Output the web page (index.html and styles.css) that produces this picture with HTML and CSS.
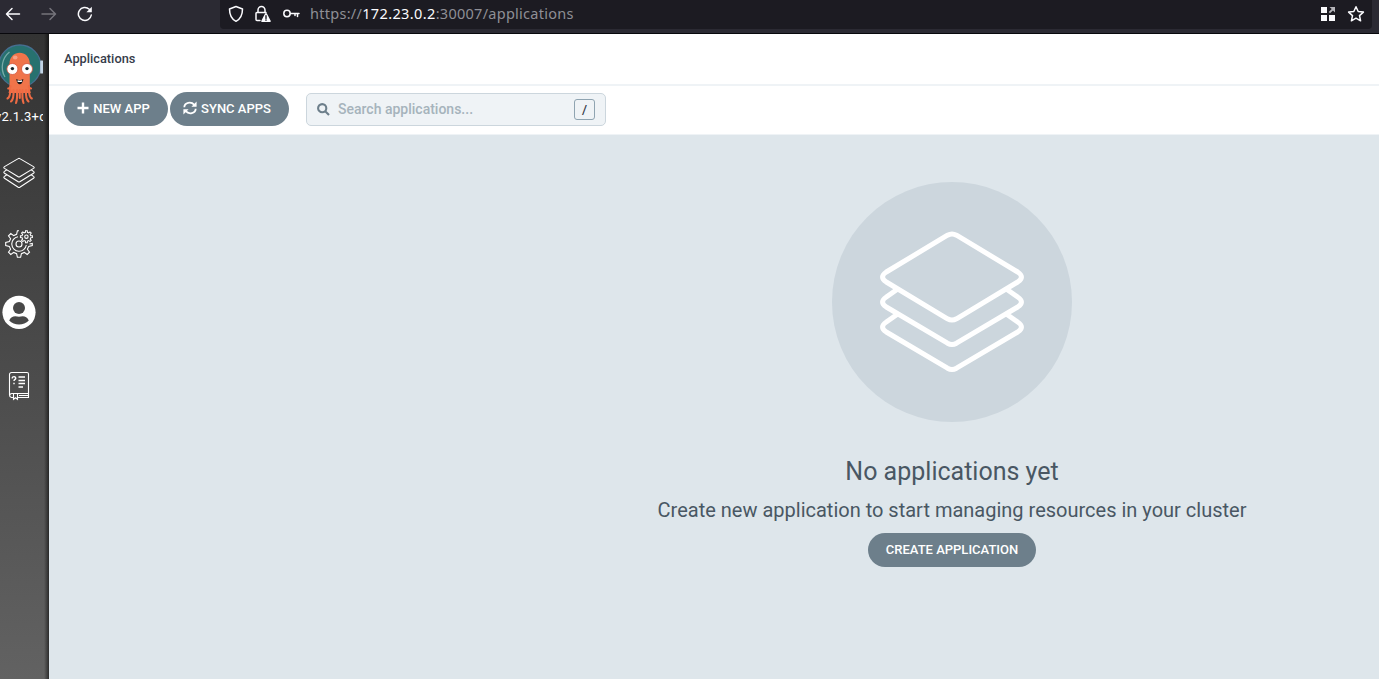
FILE: index.html
```html
<!DOCTYPE html>
<html lang="en">
<head>
<meta charset="utf-8">
<title>Applications</title>
<link rel="stylesheet" href="styles.css">
</head>
<body>
<header class="browser">
  <div class="nav">
    <svg class="back" width="16" height="16" viewBox="0 0 16 16"><path d="M14.500 8H2M7 2.500 1.500 8 7 13.500"/></svg>
    <svg class="forward" width="16" height="16" viewBox="0 0 16 16"><path d="M1 8h13M9 2.500 14.500 8 9 13.500"/></svg>
    <svg class="reload" width="16" height="16" viewBox="0 0 16 16"><path d="M14.300 9A6.500 6.500 0 1 1 12.300 3.200"/><path d="M14.800.8v5.400H9.400z" class="solid"/></svg>
  </div>
  <div class="address">
    <svg width="16" height="18" viewBox="0 0 16 18"><path d="M8 1.500 14.500 4C14.500 10 12 14.300 8 16.300 4 14.300 1.500 10 1.500 4z"/></svg>
    <svg class="lock" width="18" height="18" viewBox="0 0 18 18"><path d="M4 7.500V5a3.500 3.500 0 0 1 7 0v2.500M6 15.500H3a1 1 0 0 1-1-1v-6a1 1 0 0 1 1-1h9"/><path class="solid" d="M12 8q.6 0 .9.600L16.800 16q.2 1-.8 1H8q-1 0-.8-1L11.100 8.600Q11.400 8 12 8z"/><path class="mark" d="M12 10.800v2.700M12 15v.3"/></svg>
    <svg class="key" width="18" height="10" viewBox="0 0 18 10"><circle cx="4" cy="4.500" r="3.200"/><path d="M7.500 4.500h8.500M14.500 4.500v3M12 4.500v2"/></svg>
    <div class="url">https://<span>172.23.0.2</span>:30007/applications</div>
    <svg class="grid" width="16" height="16" viewBox="0 0 16 16"><path class="solid" d="M1 1h6v6H1zM1 9h6v6H1zM9 9h6v6H9z"/><path class="arrow" d="M9.500 1H15v5.500l-2-2L10 7.300 8.700 6l3-3z"/></svg>
    <svg class="star" width="18" height="18" viewBox="0 0 18 18"><path d="m9 1.700 2.200 4.800 5.200.6-3.900 3.500 1.100 5.200L9 13.200l-4.600 2.600 1.100-5.200-3.900-3.500 5.200-.6z"/></svg>
  </div>
</header>
<div class="app">
  <nav class="sidebar">
    <svg class="argo" width="43" height="64" viewBox="0 0 43 64">
      <circle cx="19.800" cy="22" r="21" fill="#27716f" stroke="#466f91" stroke-width="1.300"/>
      <rect x="40.200" y="16.500" width="2.800" height="13" rx=".5" fill="#c3d5e5"/>
      <path d="M5 33C0 25 2 14 9.500 8" fill="none" stroke="#78aaa7" stroke-width="1.300"/>
      <path d="M9.500 20C9.500 5 29.800 5 29.800 20v25l1 4H8.500l1-4z" fill="#f0744a"/>
      <g fill="none" stroke="#ee6b44" stroke-width="2.100" stroke-linecap="round"><path d="M10.500 42q0 2.500-2.300 2.500M28.800 42q0 2.500 2.300 2.500M10.300 46q0 7-2.800 8.500M13.500 46q.5 9-2.500 11.500M17 46q.5 9-1 13M22.500 46q-.5 9 1 13M26 46q-.5 9 2.500 11.500M29 46q0 7 2.800 8.500M19.800 46v8"/></g>
      <ellipse cx="15.200" cy="13.500" rx="2.300" ry="2" fill="#f7a186"/>
      <circle cx="12.400" cy="25" r="5.500" fill="#fff" stroke="#d5533b" stroke-width=".8"/>
      <circle cx="27" cy="25" r="5.500" fill="#fff" stroke="#d5533b" stroke-width=".8"/>
      <circle cx="12.400" cy="24.600" r="1.700" fill="#17252b"/><circle cx="27" cy="24.600" r="1.700" fill="#17252b"/>
      <path d="M16.200 35c1 7 6.200 7 7.200 0-2 1.500-5.200 1.500-7.200 0z" fill="#17181b"/><path d="M17.500 36.800q2.300 1 4.600 0" stroke="#fff" stroke-width="1.300" fill="none"/>
    </svg>
    <div class="version">v2.1.3+c</div>
    <svg class="item stack" width="34" height="32" viewBox="0 0 34 32"><path d="M17.800 1.600 31.500 9.600q1.400.9 0 1.800L17.800 19.700q-.8.500-1.600 0L2.500 11.400q-1.400-.9 0-1.800L16.200 1.600q.8-.5 1.600 0zM4.500 13 2.500 14.400q-1.400.9 0 1.800L16.200 24.700q.8.500 1.600 0L31.500 16.200q1.400-.9 0-1.800L29.500 13M4.500 18 2.500 19.400q-1.400.9 0 1.800L16.200 30.200q.8.500 1.600 0L31.500 21.200q1.400-.9 0-1.800L29.500 18"/></svg>
    <svg class="item gears" width="32" height="32" viewBox="-16 -16 32 32">
      <path d="M10.500 0 13.300-.6V1.500L9.700 2.400 8.400 5.300 10.500 8.200 8.200 10.500 5.300 8.400 2.400 9.700 1.600 13.300H-1.600L-2.400 9.700-5.300 8.400-8.200 10.500-10.500 8.200-8.400 5.300-9.700 2.400-13.300 1.600V-1.600L-9.700-2.400-8.400-5.300-10.500-8.200-8.200-10.500-5.300-8.400-2.400-9.700-1.600-13.300H0M7.300 1A7.300 7.300 0 1 1-1-7.300"/>
      <circle r="3"/>
      <path transform="translate(7.400 -7.300) scale(.45)" stroke-width="2.300" d="M9.700-2.200 13.300-2V2L9.700 2.200 8.400 5.300 10.800 8 8 10.800 5.300 8.400 2.200 9.700 2 13.300H-2L-2.200 9.700-5.300 8.400-8 10.800-10.800 8-8.400 5.300-9.700 2.200-13.300 2V-2L-9.700-2.200-8.400-5.300-10.800-8-8-10.800-5.300-8.400-2.200-9.700-2-13.300H2L2.200-9.700 5.300-8.400 8-10.800 10.800-8 8.400-5.300z"/>
      <circle cx="7.400" cy="-7.300" r="1.700"/>
    </svg>
    <svg class="user" width="34" height="34" viewBox="0 0 34 34"><circle cx="17" cy="17.300" r="16.600" fill="#fff"/><circle cx="17" cy="13" r="6" fill="#484848"/><path d="M7.200 25.500c2-5 6-4.600 9.800-3.800 3.800-.8 7.800-1.200 9.800 3.800-5 5.200-14.600 5.200-19.600 0z" fill="#484848"/></svg>
    <svg class="item docs" width="22" height="30" viewBox="0 0 22 30"><path d="M5 26.500H3.500A2.500 2.500 0 0 1 1.500 24V3.500a2 2 0 0 1 2-2h15.500a1.500 1.500 0 0 1 1.500 1.500v23.500H9.500M20.500 22.500H4a2 2 0 0 0-2.300 2M5.500 22.500v5.800l2-1.600 2 1.600v-5.800M11 24.500h9"/><path stroke-width="1.400" d="M4.200 7.500c0-2.600 4-2.300 3.500 0-.2 1-1.700 1-1.700 2.500M6 11.700v1.500M10.500 6h6.500M10.500 9.500h6.500M10.500 12.500h6.500M10.500 16h4.500"/></svg>
  </nav>
  <main class="page">
    <div class="title">Applications</div>
    <div class="toolbar">
      <button class="btn new"><svg width="12" height="12" viewBox="0 0 12 12"><path d="M6 .5v11M.5 6h11"/></svg>NEW APP</button>
      <button class="btn sync"><svg width="14" height="14" viewBox="0 0 14 14"><path d="M1.300 6.200C1.500 1.500 8 .2 11.300 3.800M12.700 7.800C12.500 12.500 6 13.800 2.700 10.200"/><path class="tip" d="M13.600.6v5.200H8.400zM.4 13.400V8.200h5.200z"/></svg>SYNC APPS</button>
      <div class="search"><svg width="13" height="13" viewBox="0 0 13 13"><circle cx="5.200" cy="5.200" r="4.100"/><path d="m8.200 8.200 3.800 3.800"/></svg><span>Search applications...</span><kbd>/</kbd></div>
    </div>
    <section class="empty">
      <div class="disc"><svg width="148" height="144" viewBox="0 0 148 144"><path d="M78.500 5.200 139.700 42q7.500 5 0 10L78.500 88.800q-4.500 2.500-9 0L8.300 52q-7.500-5 0-10L69.500 5.200q4.500-2.500 9 0zM19 59.500 8.300 67q-7.500 5 0 10L69.500 113.200q4.500 2.500 9 0L139.700 77q7.500-5 0-10L129 59.500M19 84.500 8.300 92q-7.500 5 0 10L69.500 138.200q4.500 2.500 9 0L139.700 102q7.500-5 0-10L129 84.500"/></svg></div>
      <h1>No applications yet</h1>
      <p>Create new application to start managing resources in your cluster</p>
      <button class="btn create">CREATE APPLICATION</button>
    </section>
  </main>
</div>
</body>
</html>
```
FILE: styles.css
```css
* { box-sizing: border-box; }
body { margin: 0; height: 679px; overflow: hidden; font-family: Roboto, sans-serif; background: #dee6eb; }
svg { display: block; flex: none; fill: none; }
.browser { display: flex; height: 34px; background: #2b2a33; border-bottom: 1px solid #08080c; }
.browser svg { stroke: #fbfbfe; stroke-width: 1.5; stroke-linejoin: round; stroke-linecap: round; }
.browser .solid { fill: #fbfbfe; stroke: none; }
.nav { display: flex; width: 220px; padding: 6px 0 0 5px; gap: 20px; }
.browser .forward { stroke: #75747b; }
.address { display: flex; align-items: center; width: 1152px; height: 29px; padding: 0 7px 2px 8px; background: #1c1b22; border-radius: 0 0 4px 4px; }
.lock { margin-left: 10px; }
.browser .mark { stroke: #1c1b22; stroke-width: 1.4; }
.key { margin-left: 11px; }
.url { margin: 0 auto 2px 9px; color: #8f8f96; font: 14.5px/20px "Noto Sans", sans-serif; letter-spacing: .27px; white-space: nowrap; }
.url span { color: #fbfbfe; letter-spacing: .38px; }
.browser .arrow { fill: #b5b5ba; stroke: none; }
.star { margin-left: 11px; }
.app { display: flex; height: 645px; }
.sidebar { width: 49px; flex: none; background: linear-gradient(90deg, transparent 44px, rgba(0,0,0,.55) 49px), linear-gradient(#333 0, #484848 45%, #626262 100%); }
.argo { margin-top: 10px; }
.version { width: 48px; height: 16px; margin: 1px 0 0 -5px; overflow: hidden; color: #fff; font-size: 13px; line-height: 16px; letter-spacing: .25px; }
.item { stroke: #fff; stroke-width: 1.1; }
.stack { margin: 32px 0 0 2px; }
.gears { margin: 39px 0 0 3px; }
.user { margin: 35px 0 0 2px; }
.docs { margin: 42px 0 0 8px; }
.page { flex: 1; min-width: 0; }
.title { height: 52px; padding-left: 15px; background: #fff; border-bottom: 2px solid #eff3f6; color: #363c4a; font-size: 12.8px; font-weight: 500; line-height: 49px; }
.toolbar { display: flex; height: 49px; padding: 6px 15px 0; background: #fff; border-bottom: 1px solid #eff3f6; }
.btn { display: flex; align-items: center; justify-content: center; height: 34px; padding: 0; border: 0; border-radius: 17px; background: #6d7f8b; color: #fff; font: 500 13px/34px Roboto, sans-serif; }
.btn svg { stroke: #fff; stroke-width: 2.4; margin-right: 4px; }
.new { width: 104px; margin-right: 2px; padding-right: 5px; }
.new svg { margin-bottom: 2px; }
.sync { width: 119px; padding-right: 5px; }
.sync svg { stroke-width: 1.8; margin-bottom: 2px; }
.sync .tip { fill: #fff; stroke: none; }
.search { display: flex; align-items: center; width: 300px; height: 33px; margin: 1px 0 0 17px; padding: 0 10px; background: #eff3f6; border: 1px solid #ccd6dd; border-radius: 5px; color: #a6b3bc; font-size: 14px; font-weight: 500; }
.search span { margin-bottom: 2px; }
.search svg { stroke: #6d7f8b; stroke-width: 2.1; margin-right: 8px; }
.search kbd { width: 21px; height: 21px; margin-left: auto; border: 1px solid #8fa4b1; border-radius: 3px; color: #363c4a; font: 500 13px/19px Roboto, sans-serif; text-align: center; }
.empty { display: flex; flex-direction: column; align-items: center; padding: 47px 0 0 476px; color: #495763; }
.disc { display: flex; align-items: center; justify-content: center; width: 240px; height: 240px; border-radius: 50%; background: #ccd6dd; }
.disc svg { stroke: #fff; stroke-width: 5; stroke-linejoin: round; }
.empty h1 { margin: 33px 0 0; font-size: 25px; font-weight: 400; line-height: 34px; }
.empty p { margin: 6px 0 0; font-size: 20px; line-height: 30px; white-space: nowrap; }
.create { width: 168px; margin-top: 8px; }
```
